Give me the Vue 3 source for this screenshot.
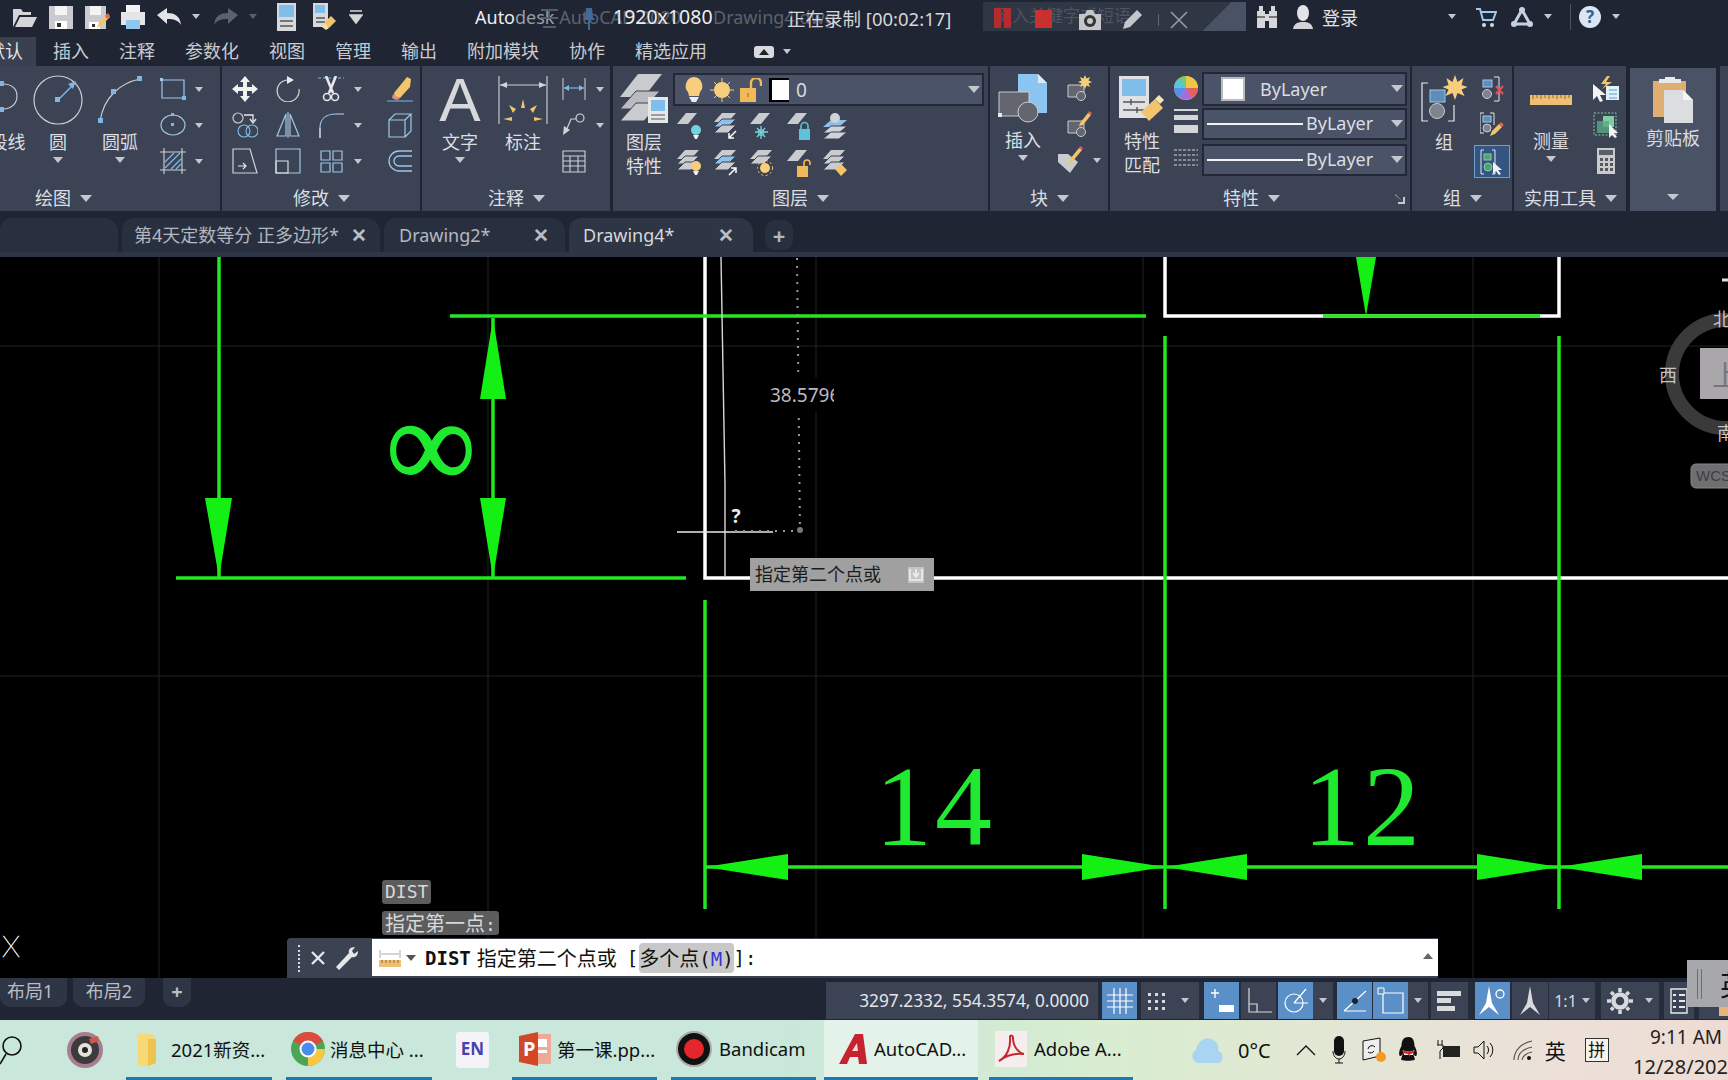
<script setup>
const menus = ['插入', '注释', '参数化', '视图', '管理', '输出', '附加模块', '协作', '精选应用']
const gridX = [159, 488, 816, 1143, 1473]
const gridY = [346, 676]
// arrow heads of the dimensions: tip x/y, then direction
const arrows = [
  '219,578 205,498 232,498',
  '493,318 480,399 506,399',
  '493,578 480,498 506,498',
  '1366,316 1356,257 1376,257',
  '705,867 788,854 788,880',
  '1165,867 1082,854 1082,880',
  '1165,867 1247,854 1247,880',
  '1559,867 1477,854 1477,880',
  '1559,867 1642,854 1642,880'
]
const greenLines = [
  [219, 257, 219, 578],
  [450, 316, 1146, 316],
  [493, 318, 493, 578],
  [176, 578, 686, 578],
  [1323, 316, 1540, 316],
  [1165, 336, 1165, 909],
  [1559, 336, 1559, 909],
  [705, 600, 705, 909],
  [705, 867, 1728, 867]
]
</script>

<template>
  <div class="screen">
    <!-- title bar -->
    <header class="titlebar">
      <div class="qat">
        <svg width="26" height="26" viewBox="0 0 26 26"><path d="M1 23V5h8l2 3h8v3H7L1 23zM3 23l5-10h17l-5 10z" fill="#d4d5d8"/></svg>
        <svg width="26" height="26" viewBox="0 0 26 26"><path d="M1 2h24v23H1z" fill="#c9cbcf"/><path d="M7 2h12v9H7z" fill="#f4f4f4"/><path d="M7 17h12v8H7z" fill="#fff"/><path d="M9 19h4v4H9z" fill="#333"/></svg>
        <svg width="26" height="26" viewBox="0 0 26 26"><path d="M1 2h21v23H1z" fill="#c9cbcf"/><path d="M6 2h11v9H6z" fill="#f4f4f4"/><path d="M5 18h11v7H5z" fill="#fff"/><path d="M8 20h3v3H8z" fill="#333"/><path d="M13 24l2-6 8-8 3 3-8 8z" fill="#f2c46d"/><path d="M21 12l3-3 2 3-3 3z" fill="#e0605c"/></svg>
        <svg width="26" height="26" viewBox="0 0 26 26"><path d="M6 1h14v7H6z" fill="#f2f2f2"/><path d="M1 8h24v13H1z" fill="#e4e5e7"/><path d="M6 16h14v9H6z" fill="#8fc7ee"/></svg>
        <svg width="26" height="20" viewBox="0 0 26 20"><path d="M1 8l10-7v5c8 0 13 3 14 12-3-5-7-6-14-6v5z" fill="#e2e3e6"/></svg>
        <span class="caret sm"></span>
        <svg class="redo" width="26" height="20" viewBox="0 0 26 20"><path d="M25 8L15 1v5C7 6 2 9 1 18c3-5 7-6 14-6v5z" fill="#5b616d"/></svg>
        <span class="caret sm dim"></span>
        <svg class="ws" width="19" height="28" viewBox="0 0 19 28"><path d="M0 0h19v28H0z" fill="#d8d9dc"/><path d="M2 2h15v12H2z" fill="#7fbdea"/><path d="M3 18h13M3 23h13" stroke="#555" stroke-width="1.5"/></svg>
        <svg class="ws2" width="24" height="28" viewBox="0 0 24 28"><path d="M0 0h15v24H0z" fill="#d8d9dc"/><path d="M2 2h10v8H2z" fill="#7fbdea"/><path d="M3 15h9M3 19h9" stroke="#555" stroke-width="1.5"/><path d="M11 20l7-7 5 5-7 7z" fill="#f2c46d"/><path d="M9 24l3-4 4 5-3 2z" fill="#f6dfa6"/></svg>
        <svg class="ws3" width="14" height="14" viewBox="0 0 14 14"><path d="M1 1h12M1 5h12L7 13z" stroke="#d4d5d8" stroke-width="1.6" fill="#d4d5d8"/></svg>
      </div>
      <div class="doc-title"><b>Auto</b><em>desk</em><span> AutoCAD 2020</span><span class="doc-name">Drawing4.dwg</span></div>
      <div class="search">键入关键字或短语</div>
      <div class="account">
        <svg width="22" height="24" viewBox="0 0 22 24"><path d="M1 6h8v17H1zM13 6h8v17h-8zM3 1h4v5H3zM15 1h4v5h-4zM9 9h4v7H9z" fill="#d6d7da"/><path d="M1 12h8M13 12h8" stroke="#555" stroke-width="1.5"/></svg>
        <svg class="user" width="22" height="26" viewBox="0 0 22 26"><ellipse cx="11" cy="9" rx="6" ry="8" fill="#e2e3e6"/><path d="M1 25c1-6 5-7 10-7s9 1 10 7z" fill="#d3d4d7"/></svg>
        <span class="login">登录</span>
        <span class="caret sm login-caret"></span>
        <svg class="cart" width="22" height="20" viewBox="0 0 22 20"><path d="M1 2h4l3 11h10l3-8H6" fill="none" stroke="#9fc8e8" stroke-width="2"/><circle cx="9" cy="18" r="2" fill="#d6d7da"/><circle cx="17" cy="18" r="2" fill="#d6d7da"/></svg>
        <svg class="tri" width="22" height="20" viewBox="0 0 22 20"><path d="M11 3L3 17h16z" fill="none" stroke="#c5d2e2" stroke-width="3"/><circle cx="11" cy="3" r="3" fill="#c5d2e2"/><circle cx="3" cy="17" r="3" fill="#c5d2e2"/><circle cx="19" cy="17" r="3" fill="#c5d2e2"/></svg>
        <span class="caret sm"></span>
        <i class="acc-sep"></i>
        <span class="help">?</span>
        <span class="caret sm"></span>
      </div>
      <!-- screen recorder overlay -->
      <div class="recorder">
        <svg class="rec-lines" width="17" height="19" viewBox="0 0 17 19"><path d="M0 1h17M0 9h17M2 18h13" stroke="#565b66" stroke-width="2"/><path d="M8 1v8" stroke="#565b66" stroke-width="2"/></svg>
        <svg class="rec-pin" width="12" height="22" viewBox="0 0 12 22"><path d="M3 0h6l1 9 2 3H0l2-3zM5 12h2v10H5z" fill="#41699a"/></svg>
        <span class="rec-size">1920x1080</span>
        <span class="rec-time">正在录制 [00:02:17]</span>
        <span class="rec-pause"><i></i><i></i></span>
        <span class="rec-stop"></span>
        <svg class="rec-cam" width="24" height="22" viewBox="0 0 24 22"><path d="M1 5h6l2-4h6l2 4h6v16H1z" fill="#c5c6c9"/><circle cx="12" cy="12" r="6" fill="#333"/><circle cx="12" cy="12" r="3" fill="#c5c6c9"/></svg>
        <svg class="rec-pen" width="22" height="22" viewBox="0 0 22 22"><path d="M1 21l2-7L15 2l5 5L8 19z" fill="#c5c6c9"/></svg>
        <i class="rec-sep"></i>
        <svg class="rec-x" width="18" height="18" viewBox="0 0 18 18"><path d="M1 1l16 16M17 1L1 17" stroke="#9a9ca0" stroke-width="1.6"/></svg>
      </div>
    </header>

    <!-- ribbon tabs -->
    <nav class="menu">
      <span class="menu-tab active">默认</span>
      <span v-for="m in menus" :key="m" class="menu-tab">{{ m }}</span>
      <span class="menu-min"><i></i></span>
      <span class="caret sm"></span>
    </nav>

    <!-- ribbon -->
    <section class="ribbon">
      <div class="panel p-draw">
        <div class="body">
          <div class="big w-poly">
            <svg width="25" height="50" viewBox="0 0 25 50"><path d="M4 9h4c9 0 14 5 14 12s-5 13-14 13H4" fill="none" stroke="#c9ccd1" stroke-width="1.2"/><rect x="4" y="6" width="5" height="5" fill="#7db7e2"/><rect x="4" y="32" width="5" height="5" fill="#7db7e2"/></svg>
            <span class="label">段线</span>
          </div>
          <div class="big w-circle">
            <svg width="50" height="50" viewBox="0 0 50 50"><circle cx="25" cy="25" r="24" fill="none" stroke="#c9ccd1" stroke-width="1.2"/><path d="M25 25L41 9" stroke="#7db7e2" stroke-width="1.4"/><path d="M43 6l-8 3 5 5z" fill="#7db7e2"/><rect x="22" y="22" width="5" height="5" fill="#7db7e2"/></svg>
            <span class="label">圆</span>
            <span class="caret"></span>
          </div>
          <div class="big w-arc">
            <svg width="48" height="50" viewBox="0 0 48 50"><path d="M4 46C8 22 24 8 44 4" fill="none" stroke="#c9ccd1" stroke-width="1.2"/><rect x="2" y="43" width="5" height="5" fill="#7db7e2"/><rect x="15" y="14" width="5" height="5" fill="#7db7e2"/><rect x="41" y="1" width="5" height="5" fill="#7db7e2"/></svg>
            <span class="label">圆弧</span>
            <span class="caret"></span>
          </div>
          <div class="smalls draw-smalls">
            <svg width="26" height="24" viewBox="0 0 26 24"><path d="M2 3h22v18H2z" fill="none" stroke="#9fc8e8" stroke-width="1.2"/><rect y="1" width="3" height="3" fill="#9fc8e8"/><rect x="22" y="19" width="4" height="4" fill="#7db7e2"/></svg>
            <span class="caret sm"></span>
            <svg width="26" height="24" viewBox="0 0 26 24"><ellipse cx="13" cy="12" rx="12" ry="10" fill="none" stroke="#9fc8e8" stroke-width="1.2"/><rect x="11" y="10" width="3" height="3" fill="#7db7e2"/><rect x="11" y="0" width="3" height="3" fill="#7db7e2"/></svg>
            <span class="caret sm"></span>
            <svg width="26" height="26" viewBox="0 0 26 26"><path d="M4 0v26M22 0v26M0 4h26M0 22h26" stroke="#d0d3d8" stroke-width="1.1"/><path d="M5 20L20 5M5 14L14 5M11 21L21 11M16 21l5-5" stroke="#7db7e2" stroke-width="1.4"/></svg>
            <span class="caret sm"></span>
          </div>
        </div>
        <div class="ptitle"><span class="t-draw">绘图</span><span class="caret t"></span></div>
      </div>

      <div class="panel p-mod">
        <div class="body">
          <div class="mod-grid">
            <svg width="26" height="26" viewBox="0 0 26 26"><path d="M13 0l5 6h-3v5h5V8l6 5-6 5v-3h-5v5h3l-5 6-5-6h3v-5H6v3l-6-5 6-5v3h5V6H8z" fill="#f2f2f3"/></svg>
            <svg width="26" height="26" viewBox="0 0 26 26"><path d="M15 4A11 11 0 1 0 24 13" fill="none" stroke="#c9ccd1" stroke-width="1.3"/><path d="M12 0l7 4-7 4z" fill="#e8e9eb"/></svg>
            <div class="with-caret">
              <svg width="26" height="26" viewBox="0 0 26 26"><path d="M0 2h26" stroke="#7db7e2" stroke-width="1" stroke-dasharray="3 2"/><path d="M8 0l7 17M18 0l-7 17" stroke="#e8e9eb" stroke-width="2.6"/><circle cx="9" cy="21" r="3.5" fill="none" stroke="#e8e9eb" stroke-width="1.6"/><circle cx="17" cy="21" r="3.5" fill="none" stroke="#e8e9eb" stroke-width="1.6"/></svg>
              <span class="caret sm"></span>
            </div>
            <svg width="26" height="26" viewBox="0 0 26 26"><path d="M7 17L20 1l4 2-1 8-10 11-5-1z" fill="#f2c46d"/><path d="M6 18l7 5-4 1-4-2z" fill="#e98a86"/><path d="M0 25h26" stroke="#7db7e2" stroke-width="1"/></svg>

            <svg width="26" height="26" viewBox="0 0 26 26"><circle cx="6" cy="6" r="5" fill="none" stroke="#c9ccd1" stroke-width="1.2"/><path d="M12 3h9v6M18 7l3 4 3-4" fill="none" stroke="#e8e9eb" stroke-width="1.3"/><circle cx="12" cy="19" r="6" fill="none" stroke="#7db7e2" stroke-width="1.2"/><circle cx="20" cy="19" r="6" fill="none" stroke="#7db7e2" stroke-width="1.2"/></svg>
            <svg width="26" height="26" viewBox="0 0 26 26"><path d="M11 2L2 24h9zM15 2l9 22h-9z" fill="none" stroke="#9fc8e8" stroke-width="1.2"/><path d="M13 0v26" stroke="#d0d3d8" stroke-width="1"/></svg>
            <div class="with-caret">
              <svg width="26" height="26" viewBox="0 0 26 26"><path d="M2 26V16C2 7 8 2 18 2" fill="none" stroke="#9fc8e8" stroke-width="1.2"/><path d="M18 2h8M2 16v10" stroke="#d0d3d8" stroke-width="1.2"/></svg>
              <span class="caret sm"></span>
            </div>
            <svg width="26" height="26" viewBox="0 0 26 26"><path d="M2 8h16v17H2zM2 8l6-6h16L18 8M18 25l6-6V2" fill="none" stroke="#9fc8e8" stroke-width="1.2"/></svg>

            <svg width="26" height="26" viewBox="0 0 26 26"><path d="M1 1h17l7 24H1zM1 1v24" fill="none" stroke="#d0d3d8" stroke-width="1.2"/><path d="M6 18h8m-3-3l3 3-3 3" fill="none" stroke="#e8e9eb" stroke-width="1.2"/></svg>
            <svg width="26" height="26" viewBox="0 0 26 26"><path d="M1 1h24v24H1z" fill="none" stroke="#9fc8e8" stroke-width="1.2"/><path d="M1 13h12v12H1z" fill="none" stroke="#e0e2e5" stroke-width="1.2"/></svg>
            <div class="with-caret">
              <svg width="26" height="26" viewBox="0 0 26 26"><path d="M3 3h9v9H3zM15 3h9v9h-9zM3 15h9v9H3zM15 15h9v9h-9z" fill="none" stroke="#9fc8e8" stroke-width="1.2"/></svg>
              <span class="caret sm"></span>
            </div>
            <svg width="26" height="26" viewBox="0 0 26 26"><path d="M25 3H12a10 10 0 0 0 0 20h13M25 8H12a5 5 0 0 0 0 10h13" fill="none" stroke="#9fc8e8" stroke-width="1.3"/></svg>
          </div>
        </div>
        <div class="ptitle"><span class="t-mod">修改</span><span class="caret t"></span></div>
      </div>

      <div class="panel p-note">
        <div class="body">
          <div class="big w-text">
            <span class="big-a">A</span>
            <span class="label">文字</span>
            <span class="caret"></span>
          </div>
          <div class="big w-dim">
            <svg width="50" height="50" viewBox="0 0 50 50"><path d="M1 1v48M49 1v48" stroke="#d0d3d8" stroke-width="1.1"/><path d="M2 10h46" stroke="#d0d3d8" stroke-width="1"/><path d="M2 10l7-3v6zM48 10l-7-3v6z" fill="#d0d3d8"/><path d="M25 24l-2 9h4zM11 30l4 8 3-4zM39 30l-4 8-3-4zM5 44l9-2v4zM45 44l-9-2v4z" fill="#f2c46d"/></svg>
            <span class="label">标注</span>
          </div>
          <div class="note-smalls">
            <div class="with-caret">
              <svg width="24" height="24" viewBox="0 0 24 24"><path d="M1 1v22M23 1v22" stroke="#d0d3d8" stroke-width="1"/><path d="M2 11h20" stroke="#7db7e2" stroke-width="1.2"/><path d="M2 11l5-3v6zM22 11l-5-3v6z" fill="#7db7e2"/></svg>
              <span class="caret sm"></span>
            </div>
            <div class="with-caret">
              <svg width="24" height="24" viewBox="0 0 24 24"><circle cx="18" cy="5" r="4" fill="none" stroke="#d0d3d8" stroke-width="1.2"/><path d="M14 6H9L4 18" fill="none" stroke="#d0d3d8" stroke-width="1.2"/><path d="M1 22l1-9 6 4z" fill="#d0d3d8"/></svg>
              <span class="caret sm"></span>
            </div>
            <svg width="24" height="24" viewBox="0 0 24 24"><path d="M1 2h22v21H1zM1 7h22M1 12h22M1 17h22M8 7v16M16 7v16" fill="none" stroke="#d0d3d8" stroke-width="1.1"/></svg>
          </div>
        </div>
        <div class="ptitle"><span class="t-note">注释</span><span class="caret t"></span></div>
      </div>

      <div class="panel p-layer">
        <div class="body layer-body">
          <div class="big w-lprop">
            <svg width="48" height="50" viewBox="0 0 48 50"><path d="M0 24L18 1h24L24 24z" fill="#c9cbcf"/><path d="M0 36l16-18h24L24 36z" fill="#b9bbc0" stroke="#3b4354"/><path d="M0 48l16-18h24L24 48z" fill="#c9cbcf" stroke="#3b4354"/><path d="M28 24h20v26H28z" fill="#e6e7e9"/><path d="M31 27h14v11H31z" fill="#7fbdea"/><path d="M31 42h14M31 46h14" stroke="#555"/></svg>
            <span class="label two">图层<br>特性</span>
          </div>
          <div class="layer-main">
            <div class="combo layer-combo">
              <svg width="20" height="26" viewBox="0 0 20 26"><path d="M10 0a9 9 0 0 1 6 15l-1 4H5l-1-4a9 9 0 0 1 6-15z" fill="#f8cd7c"/><path d="M5 20h10l-3 5H8z" fill="#eee"/></svg>
              <svg class="sun" width="24" height="24" viewBox="0 0 24 24"><path d="M12 0v24M0 12h24M4 4l16 16M20 4L4 20" stroke="#f8cd7c" stroke-width="1"/><circle cx="12" cy="12" r="8" fill="#f8cd7c"/></svg>
              <svg class="lock" width="23" height="24" viewBox="0 0 23 24"><path d="M1 10h16v14H1z" fill="#f2b95a"/><path d="M12 10V5a5 5 0 0 1 10 0v3" fill="none" stroke="#f2b95a" stroke-width="2.4"/><path d="M9 15v4" stroke="#8a6a2c"/></svg>
              <i class="swatch black"></i>
              <span class="zero">0</span>
              <span class="caret big-caret"></span>
            </div>
            <div class="layer-icons">
              <svg width="24" height="28" viewBox="0 0 24 28"><path d="M0 11L9 0h11l-9 11z" fill="#c9cbcf"/><circle cx="19" cy="17" r="5" fill="#73d3dc"/><path d="M16 22h6l-2 4h-2z" fill="#eee"/></svg>
              <svg width="24" height="28" viewBox="0 0 24 28"><path d="M0 9L8 0h14l-8 9z" fill="#c9cbcf"/><path d="M0 14l8-8h14l-8 8z" fill="#8fc0ea" stroke="#3b4354"/><path d="M0 20l8-8h14l-8 8z" fill="#c9cbcf" stroke="#3b4354"/><path d="M22 18l-7 7m0-5v5h5" fill="none" stroke="#fff" stroke-width="1.5"/></svg>
              <svg width="24" height="28" viewBox="0 0 24 28"><path d="M0 11L9 0h11l-9 11z" fill="#c9cbcf"/><path d="M11 13v13M5 19h13M7 15l8 9M15 15l-8 9" stroke="#73d3dc" stroke-width="1.3"/><circle cx="11" cy="19.500" r="3" fill="none" stroke="#73d3dc"/></svg>
              <svg width="24" height="28" viewBox="0 0 24 28"><path d="M0 11L9 0h11l-9 11z" fill="#c9cbcf"/><path d="M12 16h11v11H12z" fill="#5ec3d8"/><path d="M14 16v-3a3.500 3.500 0 0 1 7 0v3" fill="none" stroke="#5ec3d8" stroke-width="1.6"/></svg>
              <svg width="24" height="28" viewBox="0 0 24 28"><path d="M0 14l8-7h16l-8 7z" fill="#8fc0ea"/><path d="M0 20l8-7h16l-8 7z" fill="#d0d3d8" stroke="#3b4354"/><path d="M0 26l8-7h16l-8 7z" fill="#d0d3d8" stroke="#3b4354"/><circle cx="12" cy="5" r="5" fill="#d0d3d8"/></svg>

              <svg width="24" height="28" viewBox="0 0 24 28"><path d="M0 9L8 0h14l-8 9z" fill="#c9cbcf"/><path d="M0 14l8-8h14l-8 8z" fill="#c9cbcf" stroke="#3b4354"/><path d="M0 20l8-8h14l-8 8z" fill="#c9cbcf" stroke="#3b4354"/><circle cx="19" cy="16" r="5" fill="#f8cd7c"/><path d="M16 21h6l-2 4h-2z" fill="#eee"/></svg>
              <svg width="24" height="28" viewBox="0 0 24 28"><path d="M0 9L8 0h14l-8 9z" fill="#c9cbcf"/><path d="M0 14l8-8h14l-8 8z" fill="#8fc0ea" stroke="#3b4354"/><path d="M0 20l8-8h14l-8 8z" fill="#c9cbcf" stroke="#3b4354"/><path d="M15 25l7-7m-5 0h5v5" fill="none" stroke="#fff" stroke-width="1.5"/></svg>
              <svg width="24" height="28" viewBox="0 0 24 28"><path d="M0 9L8 0h14l-8 9z" fill="#c9cbcf"/><path d="M0 14l8-8h14l-8 8z" fill="#c9cbcf" stroke="#3b4354"/><circle cx="15" cy="18" r="5" fill="#f8cd7c"/><circle cx="15" cy="18" r="7.500" fill="none" stroke="#f8cd7c" stroke-dasharray="2 2.500"/></svg>
              <svg width="24" height="28" viewBox="0 0 24 28"><path d="M0 11L9 0h11l-9 11z" fill="#c9cbcf"/><path d="M10 16h11v11H10z" fill="#f2b95a"/><path d="M17 16v-3a3 3 0 0 1 6 0v2" fill="none" stroke="#f2b95a" stroke-width="1.6"/></svg>
              <svg width="24" height="28" viewBox="0 0 24 28"><path d="M0 9L8 0h14l-8 9z" fill="#c9cbcf"/><path d="M0 14l8-8h14l-8 8z" fill="#c9cbcf" stroke="#3b4354"/><path d="M0 20l8-8h14l-8 8z" fill="#c9cbcf" stroke="#3b4354"/><path d="M12 19l6-5 6 6-6 6z" fill="#f2c46d"/></svg>
            </div>
          </div>
        </div>
        <div class="ptitle"><span class="t-layer">图层</span><span class="caret t"></span></div>
      </div>

      <div class="panel p-block">
        <div class="body">
          <div class="big w-insert">
            <svg width="50" height="50" viewBox="0 0 50 50"><path d="M20 1h20l9 9v30H20z" fill="#8cc5f2"/><path d="M40 1l9 9h-9z" fill="#d8ecfb"/><path d="M1 19h30v24H1z" fill="#63666f" stroke="#c9ccd1" stroke-width="1"/><circle cx="30" cy="39" r="10" fill="#63666f" stroke="#c9ccd1" stroke-width="1"/><rect y="40" width="4" height="4" fill="#e8e9eb"/></svg>
            <span class="label">插入</span>
            <span class="caret"></span>
          </div>
          <div class="block-smalls">
            <svg width="26" height="26" viewBox="0 0 26 26"><path d="M2 10h16v12H2z" fill="#63666f" stroke="#c9ccd1"/><circle cx="15" cy="21" r="4.500" fill="#63666f" stroke="#c9ccd1"/><path d="M19 0l1.500 3.500L24 2l-1.500 3.500L26 7l-3.500 1.500L24 12l-3.500-1.500L19 14l-1.500-3.500L14 12l1.500-3.500L12 7l3.500-1.500L14 2l3.500 1.500z" fill="#f8cd7c"/></svg>
            <svg width="26" height="26" viewBox="0 0 26 26"><path d="M2 10h16v12H2z" fill="#63666f" stroke="#c9ccd1"/><circle cx="15" cy="21" r="4.500" fill="#63666f" stroke="#c9ccd1"/><path d="M14 12l8-10 3 2-8 10-4 1z" fill="#f2c46d"/><path d="M22 2l1-2 3 2-1 2z" fill="#e0605c"/></svg>
            <div class="with-caret">
              <svg width="26" height="28" viewBox="0 0 26 28"><path d="M1 8h10l10 8-8 11L1 16z" fill="#c9cbcf"/><path d="M11 18l2-5 9-11 3 2-9 11z" fill="#f2c46d"/><path d="M22 2l1-2 3 2-1 2z" fill="#e0605c"/></svg>
              <span class="caret sm"></span>
            </div>
          </div>
        </div>
        <div class="ptitle"><span class="t-block">块</span><span class="caret t"></span></div>
      </div>

      <div class="panel p-prop">
        <div class="body prop-body">
          <div class="big w-match">
            <svg width="46" height="50" viewBox="0 0 46 50"><path d="M0 4h30v42H0z" fill="#e0e1e4"/><path d="M3 7h24v17H3z" fill="#7fbdea"/><path d="M4 30h22M4 38h22M12 27v6M18 35v6" stroke="#555" stroke-width="1.4"/><path d="M22 40l14-13 8 9-14 13z" fill="#f2c46d"/><path d="M36 27l4-4 5 5-4 4z" fill="#f6e3b3"/></svg>
            <span class="label two">特性<br>匹配</span>
          </div>
          <div class="prop-mid">
            <svg width="24" height="26" viewBox="0 0 24 26"><circle cx="12" cy="13" r="12" fill="#f5a34a"/><path d="M12 13L12 1a12 12 0 0 1 12 12z" fill="#f0c649"/><path d="M12 13h12a12 12 0 0 1-6 10z" fill="#e65f5f"/><path d="M12 13l6 10a12 12 0 0 1-12 0z" fill="#a76ae0"/><path d="M12 13L6 23A12 12 0 0 1 0 13z" fill="#5c8ef0"/><path d="M12 13H0A12 12 0 0 1 6 3z" fill="#56c7d6"/><path d="M12 13L6 3a12 12 0 0 1 6-2z" fill="#6cd06c"/></svg>
            <svg width="24" height="25" viewBox="0 0 24 25"><path d="M0 0h24v2H0zM0 6h24v5H0zM0 16h24v8H0z" fill="#d5d6d9"/></svg>
            <svg width="24" height="18" viewBox="0 0 24 18"><path d="M0 1h24M0 6h24M0 11h24M0 16h24" stroke="#d5d6d9" stroke-width="1" stroke-dasharray="3 1.500"/></svg>
          </div>
          <div class="prop-combos">
            <div class="combo c1"><i class="swatch white"></i><span class="by by1">ByLayer</span><span class="caret big-caret"></span></div>
            <div class="combo c2"><i class="lw"></i><span class="by">ByLayer</span><span class="caret big-caret"></span></div>
            <div class="combo c2"><i class="lw"></i><span class="by">ByLayer</span><span class="caret big-caret"></span></div>
          </div>
        </div>
        <div class="ptitle"><span class="t-prop">特性</span><span class="caret t"></span>
          <svg class="launch" width="10" height="10" viewBox="0 0 10 10"><path d="M0 0l8 8V3h2v7H3V8h5L0 1z" fill="#c4c7cd"/></svg>
        </div>
      </div>

      <div class="panel p-group">
        <div class="body">
          <div class="big w-group">
            <svg width="46" height="50" viewBox="0 0 46 50"><path d="M7 8H1v38h6M33 8" fill="none" stroke="#e8e9eb" stroke-width="1.2"/><path d="M27 46h6V30" fill="none" stroke="#e8e9eb" stroke-width="1.2"/><rect x="9" y="15" width="15" height="12" fill="#5f8cb8" stroke="#9fc8e8"/><circle cx="16" cy="36" r="7.500" fill="#80838b" stroke="#c9ccd1"/><path d="M34 0l2.500 7 6-4-2 7 6 2-6 2.500 3 6.500-7-3-2.500 7-2.500-7-7 3 3-6.500-6-2.500 6-2-2-7 6 4z" fill="#f8cd7c"/></svg>
            <span class="label">组</span>
          </div>
          <div class="group-smalls">
            <svg width="24" height="26" viewBox="0 0 24 26"><path d="M14 1h5v24h-5" fill="none" stroke="#e8e9eb"/><rect x="3" y="4" width="9" height="7" fill="#5f8cb8" stroke="#9fc8e8"/><circle cx="7" cy="18" r="4.500" fill="#80838b" stroke="#c9ccd1"/><path d="M16 10l7 8m0-8l-7 8" stroke="#e0505c" stroke-width="2.2"/></svg>
            <svg width="24" height="26" viewBox="0 0 24 26"><path d="M4 1H0v20h4M10 1h4v12" fill="none" stroke="#e8e9eb"/><rect x="3" y="4" width="8" height="6" fill="#5f8cb8" stroke="#9fc8e8"/><circle cx="7" cy="16" r="4" fill="#80838b" stroke="#c9ccd1"/><path d="M10 24l2-5 7-7 3 3-7 7z" fill="#f2c46d"/><path d="M19 12l2-2 3 3-2 2z" fill="#e0605c"/></svg>
            <span class="sel-on">
              <svg width="24" height="26" viewBox="0 0 24 26"><path d="M4 1H1v24h3M12 1h3v24h-3" fill="none" stroke="#e8e9eb"/><rect x="4" y="5" width="7" height="6" fill="#52a078" stroke="#7ed0a4"/><circle cx="8" cy="18" r="4" fill="#52a078" stroke="#7ed0a4"/><path d="M13 13v12l3-3 3 4 2-1-3-4h4z" fill="#f2f2f3"/></svg>
            </span>
          </div>
        </div>
        <div class="ptitle"><span class="t-group">组</span><span class="caret t"></span></div>
      </div>

      <div class="panel p-util">
        <div class="body">
          <div class="big w-measure">
            <svg width="44" height="50" viewBox="0 0 44 50"><path d="M1 20h42v10H1z" fill="#eebf74"/><path d="M4 20v4M8 20v3M12 20v4M16 20v3M20 20v4M24 20v3M28 20v4M32 20v3M36 20v4M40 20v3" stroke="#8a6a2c" stroke-width="1"/></svg>
            <span class="label">测量</span>
            <span class="caret"></span>
          </div>
          <div class="util-smalls">
            <svg width="26" height="26" viewBox="0 0 26 26"><path d="M14 0l-6 8h5l-4 5 10-7h-6l4-6z" fill="#f2c46d"/><path d="M13 10h13v14H13z" fill="#dff1fb"/><path d="M16 14h8M16 18h8M16 22h8" stroke="#5f9ccc"/><path d="M0 8v16l4-4 3 6 3-1-3-6h6z" fill="#f2f2f3"/></svg>
            <svg width="26" height="26" viewBox="0 0 26 26"><path d="M1 1h22v22H1z" fill="none" stroke="#7ed0a4" stroke-dasharray="2 1.500"/><path d="M10 4h11v11H10z" fill="#7ed0a4"/><path d="M4 9h12v12H4z" fill="#5aa985" opacity=".8"/><path d="M16 12v14l3-3 3 3 2-1-3-4h4z" fill="#f2f2f3"/></svg>
            <svg width="18" height="26" viewBox="0 0 18 26"><path d="M0 0h18v26H0z" fill="#c9cbcf"/><path d="M2 2h14v5H2z" fill="#5b5e66"/><path d="M3 10h3v3H3zM8 10h3v3H8zM13 10h3v3h-3zM3 15h3v3H3zM8 15h3v3H8zM13 15h3v3h-3zM3 20h3v3H3zM8 20h3v3H8zM13 20h3v3h-3z" fill="#55585f"/></svg>
          </div>
        </div>
        <div class="ptitle"><span class="t-util">实用工具</span><span class="caret t"></span></div>
      </div>

      <div class="panel p-clip">
        <svg class="clip-ic" width="40" height="48" viewBox="0 0 40 48"><path d="M0 6h33v36H0z" fill="#dfae72"/><path d="M12 2h10v2h6v4H6V4h6z" fill="#e8e9eb"/><path d="M11 15h19l10 10v23H11z" fill="#dcdde0"/><path d="M30 15l10 10H30z" fill="#f4f4f5"/></svg>
        <span class="label clip-label">剪贴板</span>
        <span class="caret clip-caret"></span>
      </div>
      <div class="panel p-rest"></div>
    </section>

    <!-- file tabs -->
    <div class="filetabs">
      <div class="ftab first"></div>
      <div class="ftab w1"><span>第4天定数等分 正多边形*</span><b>✕</b></div>
      <div class="ftab w2"><span>Drawing2*</span><b>✕</b></div>
      <div class="ftab w3 on"><span>Drawing4*</span><b>✕</b></div>
      <div class="ftab plus">+</div>
    </div>
    <div class="strip"></div>

    <!-- model space -->
    <main class="canvas">
      <svg class="drawing" width="1728" height="721" viewBox="0 257 1728 721">
        <line v-for="x in gridX" :key="'gx' + x" :x1="x" y1="257" :x2="x" y2="978" stroke="#222" />
        <line v-for="y in gridY" :key="'gy' + y" x1="0" :y1="y" x2="1728" :y2="y" stroke="#222" />

        <path d="M705 257V578H1728M1165 257V316H1559V257" fill="none" stroke="#fff" stroke-width="3.5" />
        <line v-for="(l, i) in greenLines" :key="i" :x1="l[0]" :y1="l[1]" :x2="l[2]" :y2="l[3]" stroke="#22e822" stroke-width="3.5" />
        <polygon v-for="p in arrows" :key="p" :points="p" fill="#14f014" />

        <text x="431" y="487" class="dim-text inf" text-anchor="middle" font-size="126">∞</text>
        <text x="875" y="845" class="dim-text num" font-size="114">14</text>
        <text x="1303" y="845" class="dim-text num" font-size="114">12</text>

        <!-- rubber band of the running DIST command -->
        <path d="M721 257L725 484V578" fill="none" stroke="#d8d8d8" stroke-width="1.4" />
        <path d="M677 532H773" stroke="#e8e8e8" stroke-width="1.4" />
        <path d="M735 531H800V530L797 257" fill="none" stroke="#999" stroke-width="2" stroke-dasharray="2 6" />
        <circle cx="800" cy="530" r="3" fill="#777" />
        <rect x="764" y="378" width="70" height="34" fill="#000" />
        <text x="770" y="402" class="measure" clip-path="url(#dimclip)">38.5796</text>
        <clipPath id="dimclip"><rect x="764" y="378" width="70" height="34" /></clipPath>
        <text x="736" y="523" class="quest">?</text>

        <!-- view cube -->
        <circle cx="1726" cy="374" r="54" fill="none" stroke="#3a3a3a" stroke-width="14" />
        <rect x="1700" y="348" width="40" height="51" fill="#aaa7ab" />
        <path d="M1722 280h6" stroke="#ddd" stroke-width="3" />
        <text x="1726" y="386" class="cube top">上</text>
        <text x="1713" y="326" class="cube">北</text>
        <text x="1659" y="382" class="cube">西</text>
        <text x="1717" y="440" class="cube">南</text>
        <rect x="1691" y="464" width="50" height="24" rx="5" fill="#6f6f72" stroke="#888" />
        <text x="1696" y="481" class="wcs">WCS</text>

        <text x="2" y="957" class="ucs">X</text>
      </svg>

      <div class="tip">
        <span>指定第二个点或</span>
        <svg width="16" height="16" viewBox="0 0 16 16"><path d="M0 0h16v16H0z" fill="#c4c4c4"/><path d="M2 2v11h12V2M8 2v7M5 6l3 4 3-4" fill="none" stroke="#eee" stroke-width="1.6"/></svg>
      </div>

      <div class="history">
        <span class="hist-line">DIST</span>
        <span class="hist-line wide">指定第一点<span class="mono">:</span></span>
      </div>

      <div class="command">
        <div class="cmd-tools">
          <i class="grip"></i>
          <svg width="16" height="16" viewBox="0 0 16 16"><path d="M2 2l12 12M14 2L2 14" stroke="#e6e7e9" stroke-width="2.4"/></svg>
          <svg width="24" height="24" viewBox="0 0 24 24"><path d="M1 21l13-14c-1-3 1-6 6-6l-3 4 2 3 4-3c0 5-3 7-6 6L4 24z" fill="#e6e7e9"/></svg>
        </div>
        <div class="cmd-input">
          <svg width="22" height="18" viewBox="0 0 22 18"><path d="M1 1v8M21 1v8M2 5h18" stroke="#aaa" stroke-width="1"/><path d="M0 11h22v7H0z" fill="#eebf74"/><path d="M3 11v3M7 11v3M11 11v3M15 11v3M19 11v3" stroke="#8a6a2c"/></svg>
          <span class="caret cmd-caret"></span>
          <b class="mono cmd-name">DIST</b>
          <span class="cmd-text">指定第二个点或</span>
          <span class="mono cmd-br">[</span>
          <span class="cmd-opt">多个点<span class="mono">(<em>M</em>)</span></span>
          <span class="mono">]:</span>
          <span class="cmd-up"></span>
        </div>
      </div>
    </main>

    <!-- layout tabs + status bar -->
    <div class="bottom">
      <div class="layouts">
        <span class="ltab t1">布局1</span>
        <span class="ltab t2">布局2</span>
        <span class="ltab plus">+</span>
      </div>
      <div class="status">
        <span class="cell coords">3297.2332, 554.3574, 0.0000</span>
        <span class="cell st on w35"><svg width="26" height="26" viewBox="0 0 26 26"><path d="M7 0v26M13 0v26M19 0v26M0 7h26M0 13h26M0 19h26" stroke="#fff" stroke-width="1.2"/></svg></span>
        <span class="cell st w38 shift"><svg width="18" height="18" viewBox="0 0 18 18"><path d="M1 1h3v3H1zM8 1h3v3H8zM15 1h3v3h-3zM1 8h3v3H1zM8 8h3v3H8zM15 8h3v3h-3zM1 15h3v3H1zM8 15h3v3H8zM15 15h3v3h-3z" fill="#d9dadd"/></svg></span>
        <span class="cell st w20 shift"><span class="caret sm"></span></span>
        <span class="cell st on w35 ml5"><svg width="26" height="26" viewBox="0 0 26 26"><path d="M6 1v9M2 5h8" stroke="#fff" stroke-width="1.4"/><path d="M10 17h15v7H10z" fill="#fff"/></svg></span>
        <span class="cell st w35 ml2"><svg width="26" height="26" viewBox="0 0 26 26"><path d="M3 0v24h23M3 16h8v8" fill="none" stroke="#d9dadd" stroke-width="1.2"/></svg></span>
        <span class="cell st on w35 ml2"><svg width="26" height="26" viewBox="0 0 26 26"><circle cx="11" cy="15" r="9" fill="none" stroke="#fff" stroke-width="1.2"/><path d="M11 15L23 1M11 15h14" stroke="#fff" stroke-width="1.2"/></svg></span>
        <span class="cell st w20"><span class="caret sm"></span></span>
        <span class="cell st on w35 ml4"><svg width="26" height="26" viewBox="0 0 26 26"><path d="M2 23L24 3M2 23h22" fill="none" stroke="#fff" stroke-width="1.2"/><circle cx="13" cy="13" r="3" fill="#1e2330"/></svg></span>
        <span class="cell st on w35 ml1"><svg width="28" height="28" viewBox="0 0 28 28"><path d="M6 6h20v20H6z" fill="none" stroke="#fff" stroke-width="1.2"/><path d="M1 1h6v6H1z" fill="#5b8fc7" stroke="#fff"/></svg></span>
        <span class="cell st w20"><span class="caret sm"></span></span>
        <span class="cell st w37 ml3"><svg width="26" height="24" viewBox="0 0 26 24"><path d="M0 2h24v5H0zM0 9h14v5H0zM0 17h18v5H0z" fill="#d9dadd"/></svg></span>
        <span class="cell st on w35 ml7"><svg width="28" height="30" viewBox="0 0 28 30"><path d="M10 0l3 17 7 12-10-8-10 8 7-12z" fill="#fff"/><circle cx="21" cy="8" r="4" fill="none" stroke="#fff" stroke-width="1.3"/></svg></span>
        <span class="cell st w36 ml2"><svg width="20" height="30" viewBox="0 0 20 30"><path d="M10 0l3 17 7 12-10-8-10 8 7-12z" fill="#d9dadd"/></svg></span>
        <span class="cell st w46 ml1 scale">1:1<span class="caret sm"></span></span>
        <span class="cell st w58 ml6"><svg width="26" height="26" viewBox="0 0 26 26"><circle cx="13" cy="13" r="6.500" fill="none" stroke="#d9dadd" stroke-width="4.500"/><path d="M13 0v26M0 13h26M4 4l18 18M22 4L4 22" stroke="#d9dadd" stroke-width="3.500" stroke-dasharray="4 18"/></svg><span class="caret sm"></span></span>
        <span class="cell st w30 ml5"><svg width="18" height="26" viewBox="0 0 18 26"><path d="M1 1h16v24H1z" fill="none" stroke="#e8e9eb" stroke-width="1.4"/><path d="M3 7h3M9 7h6M3 13h3M9 13h6M3 19h3M9 19h6" stroke="#e8e9eb" stroke-width="2"/></svg></span>
        <span class="cell st orange ml5"><i></i></span>
      </div>
      <div class="ime-float"><i></i><span>英</span></div>
    </div>

    <!-- windows taskbar -->
    <footer class="taskbar">
      <svg class="tb-search" width="24" height="30" viewBox="0 0 24 30"><circle cx="12" cy="11" r="9" fill="none" stroke="#111" stroke-width="1.6"/><path d="M6 19L0 29" stroke="#111" stroke-width="1.6"/></svg>
      <svg class="tb-music" width="36" height="36" viewBox="0 0 36 36"><circle cx="18" cy="18" r="18" fill="#a87d92"/><circle cx="18" cy="18" r="14" fill="#3c3a3a"/><circle cx="18" cy="18" r="7" fill="#e6e1dc"/><circle cx="18" cy="18" r="3" fill="#222"/><path d="M22 7l9-3 1 5-8 3z" fill="#d0584a"/></svg>
      <div class="task t-folder">
        <svg width="22" height="36" viewBox="0 0 22 36"><path d="M2 3h14l4 5v24l-8 3H2z" fill="#f7d978"/><path d="M12 8l8 0v24l-8 3z" fill="#f0c34e"/></svg>
        <span>2021新资...</span>
      </div>
      <div class="task t-chrome">
        <svg width="34" height="34" viewBox="0 0 34 34"><circle cx="17" cy="17" r="17" fill="#4aa654"/><path d="M17 17L2 9a17 17 0 0 1 30 0z" fill="#dd4b3e"/><path d="M17 17h17a17 17 0 0 1-17 17z" fill="#f7c83f"/><circle cx="17" cy="17" r="8.500" fill="#fff"/><circle cx="17" cy="17" r="6.500" fill="#4a8bf0"/></svg>
        <span>消息中心 ...</span>
      </div>
      <div class="task t-en">
        <span class="en-icon">EN</span>
      </div>
      <div class="task t-ppt">
        <svg width="32" height="34" viewBox="0 0 32 34"><path d="M12 2h20v30H12z" fill="#f0a995"/><path d="M17 7h11v8H17zM17 18h11v3H17z" fill="#fff"/><path d="M0 4l19-4v34L0 30z" fill="#d24726"/></svg>
        <b class="ppt-p">P</b>
        <span>第一课.pp...</span>
      </div>
      <div class="task t-bandi">
        <svg width="36" height="36" viewBox="0 0 36 36"><circle cx="18" cy="18" r="17" fill="#111" stroke="#aaa" stroke-width="2"/><circle cx="18" cy="18" r="10" fill="#e6262d"/></svg>
        <span>Bandicam</span>
      </div>
      <div class="task t-acad">
        <svg width="28" height="34" viewBox="0 0 28 34"><path d="M0 32L16 2h8l4 30h-8l-1-7h-8l-3 7z" fill="#c8212f"/><path d="M13 19h6l-1-8z" fill="#f0dada"/></svg>
        <span>AutoCAD...</span>
      </div>
      <div class="task t-adobe">
        <svg width="34" height="36" viewBox="0 0 34 36"><path d="M0 0h32v36H0z" fill="#f4efee"/><path d="M4 30c8-4 12-14 11-24 0-2 3-2 3 1 0 9 6 15 11 16-8-1-17 1-25 7z" fill="none" stroke="#c8252c" stroke-width="2"/></svg>
        <span>Adobe A...</span>
      </div>
      <div class="tray">
        <svg class="tr-cloud" width="34" height="28" viewBox="0 0 34 28"><path d="M7 27a7 7 0 0 1-2-13C6 6 14 0 20 3c6 2 9 8 7 12 6 1 7 12-1 12z" fill="#a9d5f2"/></svg>
        <span class="temp">0°C</span>
        <svg class="tr-up" width="20" height="12" viewBox="0 0 20 12"><path d="M1 11l9-9 9 9" fill="none" stroke="#111" stroke-width="1.3"/></svg>
        <svg class="tr-mic" width="14" height="28" viewBox="0 0 14 28"><rect x="2" y="0" width="10" height="20" rx="5" fill="#111"/><path d="M1 15c0 5 3 8 6 8s6-3 6-8M7 23v4M3 27h8" fill="none" stroke="#111"/></svg>
        <svg class="tr-sync" width="24" height="26" viewBox="0 0 24 26"><path d="M1 4l17-3v18L1 23z" fill="#eee" stroke="#111"/><circle cx="19" cy="20" r="5" fill="#f29a21"/><path d="M6 12a4 4 0 0 1 7-2M12 14a4 4 0 0 1-6 1" fill="none" stroke="#111"/></svg>
        <svg class="tr-qq" width="19" height="26" viewBox="0 0 19 26"><path d="M9.500 0c5 0 6 5 6 9 3 5 3 10 1 10-1 0-1-1-2-2 0 3 2 4 1 6-3 1-10 1-13 0-1-2 1-3 1-6-1 1-1 2-2 2-2 0-2-5 1-10 0-4 1-9 7-9z" fill="#111"/><path d="M4 13c3 2 8 2 11 0l-1 5H5z" fill="#eee"/><path d="M3 13c4 2 9 2 13 0l-1 3-4 1v3l-2-3-5-1z" fill="#d22"/></svg>
        <svg class="tr-bat" width="24" height="20" viewBox="0 0 24 20"><path d="M6 6h17v11H6z" fill="#222"/><path d="M1 0v5M5 0v5M0 5h6v3L3 11v8" fill="none" stroke="#111"/></svg>
        <svg class="tr-vol" width="22" height="22" viewBox="0 0 22 22"><path d="M1 8h4l6-6v18l-6-6H1z" fill="none" stroke="#111"/><path d="M14 7a6 6 0 0 1 0 8M17 4a10 10 0 0 1 0 14" fill="none" stroke="#111"/></svg>
        <svg class="tr-wifi" width="20" height="22" viewBox="0 0 20 22"><path d="M1 21C1 12 8 4 19 2M5 21c0-6 5-11 14-13M9 21c0-3 4-7 10-8" fill="none" stroke="#555" stroke-width="1.200"/><circle cx="16" cy="19" r="2" fill="#111"/></svg>
        <span class="tr-en">英</span>
        <span class="tr-pin">拼</span>
        <div class="clock"><span>9:11 AM</span><span class="date">12/28/2021</span></div>
      </div>
    </footer>
  </div>
</template>

<style>
html, body { margin: 0; background: #000; overflow: hidden; }
</style>

<style scoped>
.screen {
  width: 1728px;
  height: 1080px;
  overflow: hidden;
  position: relative;
  display: flex;
  flex-direction: column;
  background: #1f2532;
  font-family: "Noto Sans", "Noto Sans CJK SC", sans-serif;
  color: #d8dadf;
}
svg { display: block; flex: none; }
.mono { font-family: "DejaVu Sans Mono", "Noto Sans CJK SC", monospace; }

.caret {
  display: block;
  flex: none;
  width: 0;
  height: 0;
  border-left: 5px solid transparent;
  border-right: 5px solid transparent;
  border-top: 6px solid #c4c7cd;
}
.caret.sm { border-left-width: 4px; border-right-width: 4px; border-top-width: 5px; }
.caret.dim { border-top-color: #5b616d; }
.caret.t { border-left-width: 6px; border-right-width: 6px; border-top-width: 7px; margin-left: 9px; }

/* title bar */
.titlebar {
  height: 37px;
  flex: none;
  display: flex;
  align-items: center;
  position: relative;
}
.qat {
  display: flex;
  align-items: center;
  gap: 10px;
  padding-left: 12px;
  padding-bottom: 4px;
  width: 463px;
  flex: none;
  box-sizing: border-box;
}
.qat .redo { margin-left: 3px; }
.qat .ws { margin-left: 10px; }
.qat .ws2 { margin-left: 7px; }
.qat .ws3 { margin-left: 2px; }
.doc-title {
  width: 520px;
  flex: none;
  font-size: 18px;
  white-space: nowrap;
  overflow: hidden;
  color: #5c626e;
  padding-left: 12px;
  padding-bottom: 3px;
  box-sizing: border-box;
}
.doc-title b { font-weight: 400; color: #eceef1; }
.doc-title em { font-style: normal; color: #9a9ea6; }
.doc-name { margin-left: 32px; }
.search {
  width: 263px;
  height: 29px;
  flex: none;
  background: linear-gradient(135deg, #2f3644 85%, #4a5366 85%);
  color: #4e5461;
  font-size: 17px;
  line-height: 28px;
  padding-left: 12px;
  box-sizing: border-box;
  align-self: flex-start;
  margin-top: 2px;
}
.account {
  display: flex;
  align-items: center;
  padding-left: 10px;
  padding-bottom: 4px;
  flex: 1;
  gap: 11px;
}
.user { margin-left: 3px; }
.login { font-size: 18px; color: #e0e2e6; margin-left: -3px; }
.login-caret { margin-left: 79px; }
.cart { margin-left: 8px; }
.tri { margin-left: 3px; }
.acc-sep { width: 1px; height: 26px; background: #4c5361; margin-left: 7px; }
.help {
  width: 22px;
  height: 22px;
  border-radius: 50%;
  background: #dbe6f3;
  color: #2f5fa0;
  font-weight: 700;
  font-size: 17px;
  line-height: 22px;
  text-align: center;
  margin-left: -3px;
}

/* recorder overlay */
.recorder {
  position: absolute;
  left: 613px;
  top: 0;
  height: 37px;
  width: 580px;
}
.recorder > * { position: absolute; }
.rec-lines { left: -72px; top: 9px; }
.rec-pin { left: -30px; top: 8px; }
.rec-size { left: 0; top: 3px; font-size: 19.500px; color: #eee; }
.rec-time { left: 174px; top: 5px; font-size: 18.500px; color: #d6d7da; white-space: nowrap; }
.rec-pause { left: 381px; top: 8px; display: flex; gap: 3px; }
.rec-pause i { width: 7px; height: 20px; background: #b52c30; }
.rec-stop { left: 422px; top: 10px; width: 17px; height: 18px; background: #c9302f; }
.rec-cam { left: 465px; top: 9px; }
.rec-pen { left: 509px; top: 8px; }
.rec-sep { left: 545px; top: 14px; width: 1px; height: 12px; background: #666; }
.rec-x { left: 557px; top: 11px; }

/* menu */
.menu {
  height: 29px;
  flex: none;
  display: flex;
  align-items: center;
  gap: 30px;
  margin-left: -26px;
  overflow: visible;
}
.menu-tab { font-size: 18px; line-height: 29px; color: #c8cbd1; white-space: nowrap; }
.menu-tab.active { background: #39404f; padding: 0 13px; margin-right: -13px; color: #e2e4e8; }
.menu-min {
  width: 20px;
  height: 12px;
  background: #d8dadf;
  border-radius: 3px;
  margin-left: 17px;
  position: relative;
}
.menu-min i {
  position: absolute;
  left: 5px;
  top: 3px;
  border-left: 5px solid transparent;
  border-right: 5px solid transparent;
  border-bottom: 6px solid #222;
}
.menu .caret { margin-left: -21px; }

/* ribbon */
.ribbon {
  height: 145px;
  flex: none;
  display: flex;
  gap: 2px;
  overflow: hidden;
}
.panel {
  background: #3b4354;
  height: 145px;
  display: flex;
  flex-direction: column;
  flex: none;
  position: relative;
}
.p-draw { width: 220px; }
.p-mod { width: 198px; }
.p-note { width: 188px; }
.p-layer { width: 375px; margin-left: 1px; }
.p-block { width: 118px; }
.p-prop { width: 300px; }
.p-group { width: 100px; }
.p-util { width: 112px; }
.p-clip {
  width: 86px;
  margin-left: 2px;
  background: #4a5366;
  height: 143px;
  margin-top: 2px;
  align-items: center;
}
.p-rest { width: 10px; margin-left: 2px; }
.body { height: 120px; display: flex; box-sizing: border-box; padding-top: 9px; }
.big { display: flex; flex-direction: column; align-items: center; flex: none; }
.label { font-size: 18px; line-height: 24px; margin-top: 5px; color: #dcdee2; text-align: center; white-space: nowrap; }
.label.two { margin-top: 7px; }
.big > .caret { margin-top: 3px; }

.ptitle {
  height: 25px;
  display: flex;
  align-items: center;
  font-size: 18px;
  line-height: 25px;
  color: #dcdee2;
  position: relative;
}
.t-draw { margin-left: 35px; }
.t-mod { margin-left: 71px; }
.t-note { margin-left: 66px; }
.t-layer { margin-left: 159px; }
.t-block { margin-left: 40px; }
.t-prop { margin-left: 113px; }
.launch { position: absolute; right: 5px; top: 8px; }
.t-group { margin-left: 31px; }
.t-util { margin-left: 10px; }

.w-poly { width: 25px; margin-left: -5px; }
.w-circle { width: 50px; margin-left: 13px; }
.w-arc { width: 48px; margin-left: 13px; }
.draw-smalls {
  display: grid;
  grid-template-columns: 26px 10px;
  column-gap: 8px;
  grid-auto-rows: 36px;
  align-items: center;
  justify-items: center;
  margin-left: 16px;
  margin-top: -4px;
}
.mod-grid {
  display: grid;
  grid-template-columns: 26px 26px 52px 26px;
  column-gap: 17px;
  grid-auto-rows: 36px;
  align-items: center;
  justify-items: start;
  margin: -4px 0 0 10px;
}
.with-caret { display: flex; align-items: center; gap: 10px; }
.big-a {
  font-family: "Liberation Sans", sans-serif;
  font-size: 62px;
  line-height: 50px;
  height: 50px;
  color: #d7d8dc;
}
.w-text { width: 44px; margin-left: 16px; }
.w-dim { width: 50px; margin-left: 16px; }
.note-smalls {
  display: flex;
  flex-direction: column;
  margin: -4px 0 0 14px;
}
.note-smalls > * { height: 36px; display: flex; align-items: center; }

.w-lprop { width: 48px; margin-left: 7px; }
.layer-body { padding-top: 7px; }
.layer-main { margin-left: 5px; }
.combo {
  background: #4a5368;
  border: 2px solid #222836;
  box-sizing: border-box;
  display: flex;
  align-items: center;
  position: relative;
}
.layer-combo { width: 311px; height: 33px; padding-left: 9px; }
.sun { margin-left: 6px; }
.lock { margin-left: 5px; }
.swatch { width: 20px; height: 20px; background: #fff; display: block; flex: none; }
.swatch.black { border-left: 3px solid #000; border-top: 2px solid #000; border-bottom: 2px solid #000; width: 17px; margin-left: 7px; }
.zero { font-size: 19px; margin-left: 7px; color: #d8dadf; }
.big-caret {
  position: absolute;
  right: 2px;
  top: 11px;
  border-left-width: 6px;
  border-right-width: 6px;
  border-top-width: 7px;
}
.layer-icons {
  display: grid;
  grid-template-columns: repeat(5, 24px);
  column-gap: 12.500px;
  grid-auto-rows: 37px;
  align-items: center;
  margin: 2px 0 0 4px;
}

.w-insert { width: 50px; margin-left: 8px; margin-top: -2px; }
.block-smalls {
  display: flex;
  flex-direction: column;
  margin: -5px 0 0 9px;
}
.block-smalls > * { height: 36px; display: flex; align-items: center; }
.block-smalls svg { align-self: center; }
.block-smalls > svg { height: 26px; margin: 5px 0; }

.w-match { width: 46px; margin-left: 9px; }
.prop-body { padding-top: 6px; }
.prop-mid {
  display: flex;
  flex-direction: column;
  margin: 3px 0 0 9px;
  gap: 8px;
}
.prop-mid > svg:last-child { margin-top: 7px; }
.prop-combos {
  margin-left: 4px;
  display: flex;
  flex-direction: column;
  gap: 2px;
}
.c1, .c2 { width: 205px; }
.c1 { height: 34px; padding-left: 17px; }
.c2 { height: 32px; }
.c2 + .c2 { margin-top: 2px; }
.c2 .big-caret { top: 10px; }
.c2 .by { margin-bottom: 3px; }
.c2 .lw { margin-bottom: 1px; }
.c1 .swatch { width: 24px; height: 24px; box-sizing: border-box; border: 2px solid #bbb; }
.by { font-size: 18px; color: #dcdee2; line-height: 28px; }
.by1 { margin-left: 15px; }
.lw { width: 96px; height: 2px; background: #f2f2f3; display: block; margin: 0 3px; }

.w-group { width: 46px; margin-left: 9px; }
.group-smalls {
  display: flex;
  flex-direction: column;
  align-items: center;
  margin: -4px 0 0 7px;
  width: 36px;
}
.group-smalls > svg { margin: 5px 0; }
.sel-on {
  width: 36px;
  height: 33px;
  display: flex;
  align-items: center;
  justify-content: center;
  background: #34557f;
  border: 1px solid #6fa0d0;
  box-sizing: border-box;
  margin-top: 2px;
}

.w-measure { width: 44px; margin-left: 15px; }
.w-measure .label { margin-top: 4px; }
.util-smalls {
  display: flex;
  flex-direction: column;
  align-items: center;
  margin: -4px 0 0 19px;
  width: 28px;
}
.util-smalls > svg { margin: 5px 0; }

.clip-ic { margin-top: 7px; }
.clip-label { margin-top: 3px; }
.clip-caret { margin-top: 44px; border-left-width: 6px; border-right-width: 6px; border-top-width: 6px; }

/* file tabs */
.filetabs {
  height: 41px;
  flex: none;
  display: flex;
  align-items: flex-end;
  gap: 4px;
  box-sizing: border-box;
}
.ftab {
  height: 34px;
  background: #283040;
  border-radius: 12px 14px 0 0;
  display: flex;
  align-items: center;
  font-size: 18px;
  line-height: 34px;
  color: #b3b7bf;
  box-sizing: border-box;
  flex: none;
  white-space: nowrap;
}
.ftab b { font-weight: 700; color: #b9bdc4; font-size: 19px; width: 20px; text-align: center; }
.ftab.first { width: 118px; }
.ftab.w1 { width: 258px; padding-left: 12px; }
.ftab.w1 span { width: 215px; }
.ftab.w2 { width: 181px; padding-left: 15px; }
.ftab.w2 span { width: 132px; }
.ftab.w3 { width: 184px; padding-left: 14px; background: #2e3545; color: #d5d8dd; }
.ftab.w3 span { width: 133px; }
.ftab.plus { width: 28px; height: 30px; margin-left: 8px; margin-bottom: 2px; justify-content: center; font-size: 22px; font-weight: 700; border-radius: 10px; }
.strip { height: 5px; flex: none; background: #2e3545; }

/* canvas */
.canvas {
  height: 721px;
  flex: none;
  background: #000;
  position: relative;
  overflow: hidden;
}
.drawing { position: absolute; left: 0; top: 0; }
.dim-text { font-family: "Liberation Serif", serif; fill: #1fea2f; }
.inf { stroke: #1fea2f; stroke-width: 1.5px; }
.num { letter-spacing: 3px; }
.measure { font-family: "Noto Sans", sans-serif; font-size: 19px; fill: #b9b9c2; }
.quest { font-family: "Noto Sans", sans-serif; font-size: 19px; font-weight: 700; fill: #eee; text-anchor: middle; }
.cube { font-family: "Noto Sans CJK SC", sans-serif; font-size: 18px; fill: #c4c4c4; }
.cube.top { font-size: 28px; fill: #77757a; text-anchor: middle; }
.wcs { font-family: "Liberation Sans", sans-serif; font-size: 15px; fill: #3e3e42; }
.ucs { font-family: "Lato", sans-serif; font-size: 30px; fill: #fff; stroke: #fff; stroke-width: 0.5px; font-weight: 100; }

.tip {
  position: absolute;
  left: 750px;
  top: 301px;
  width: 184px;
  height: 33px;
  background: #a0a0a0;
  color: #1c1c1c;
  font-size: 18px;
  line-height: 31px;
  padding: 0 10px 0 5px;
  box-sizing: border-box;
  display: flex;
  align-items: center;
  justify-content: space-between;
}
.history {
  position: absolute;
  left: 382px;
  top: 623px;
  display: flex;
  flex-direction: column;
  align-items: flex-start;
  gap: 7px;
}
.hist-line {
  background: #5c5c5c;
  border-radius: 3px;
  color: #d8d8d8;
  height: 24px;
  line-height: 24px;
  padding: 0 3px;
  font-size: 18px;
  font-family: "DejaVu Sans Mono", "Noto Sans CJK SC", monospace;
}
.hist-line.wide { font-size: 20px; font-family: "Noto Sans CJK SC", sans-serif; }
.hist-line.wide .mono { font-size: 18px; }
.command {
  position: absolute;
  left: 287px;
  top: 681px;
  width: 1151px;
  height: 40px;
  display: flex;
  background: #3b4252;
  border-radius: 4px 0 0 0;
}
.cmd-tools {
  width: 85px;
  flex: none;
  display: flex;
  align-items: center;
  padding-left: 11px;
  gap: 9px;
  box-sizing: border-box;
}
.grip { width: 0; height: 27px; border-left: 2px dotted #d8dadf; margin-right: 1px; }
.cmd-input {
  flex: 1;
  background: #fff;
  height: 37px;
  margin-top: 1px;
  color: #111;
  display: flex;
  align-items: center;
  padding-left: 7px;
  font-size: 19px;
  position: relative;
}
.cmd-caret { margin-left: 5px; border-top-color: #555; }
.cmd-name { margin-left: 9px; font-weight: 700; }
.cmd-text { font-size: 20px; margin-left: 6px; font-family: "Noto Sans CJK SC", sans-serif; }
.cmd-br { margin-left: 10px; }
.cmd-opt {
  background: #c8c8c8;
  border-radius: 4px;
  font-size: 20px;
  font-family: "Noto Sans CJK SC", sans-serif;
  height: 30px;
  line-height: 30px;
  white-space: nowrap;
  margin-left: 1px;
}
.cmd-opt .mono { font-size: 19px; }
.cmd-opt em { font-style: normal; color: #3737d8; }
.cmd-up {
  position: absolute;
  right: 5px;
  top: 14px;
  border-left: 5px solid transparent;
  border-right: 5px solid transparent;
  border-bottom: 6px solid #666;
}

/* layout tabs and status bar */
.bottom {
  height: 42px;
  flex: none;
  display: flex;
  position: relative;
  background: #1f2532;
}
.layouts {
  width: 826px;
  flex: none;
  display: flex;
  align-items: flex-start;
}
.ltab {
  height: 29px;
  line-height: 27px;
  font-size: 18px;
  background: #2e3545;
  color: #b9bdc4;
  border-radius: 0 0 10px 10px;
  text-align: center;
  flex: none;
}
.ltab.t1 { width: 67px; padding-left: 7px; box-sizing: border-box; text-align: left; }
.ltab.t2 { width: 72px; margin-left: 6px; }
.ltab.plus { width: 28px; margin-left: 18px; font-weight: 700; font-size: 20px; }
.status {
  flex: 1;
  height: 37px;
  margin-top: 4px;
  background: #262c39;
  display: flex;
  gap: 0;
}
.cell {
  height: 37px;
  background: #3b4354;
  flex: none;
  display: flex;
  align-items: center;
  justify-content: center;
  box-sizing: border-box;
}
.coords { width: 272px; margin-right: 4px; font-size: 17.300px; color: #e4e6ea; justify-content: flex-end; padding-right: 9px; white-space: nowrap; }
.st.on { background: #5b8fc7; }
.w20 { width: 20px; }
.w30 { width: 30px; }
.w35 { width: 35px; }
.w36 { width: 36px; }
.w37 { width: 37px; }
.w38 { width: 38px; margin-left: 4px; }
.w46 { width: 46px; }
.w58 { width: 58px; gap: 12px; }
.shift { padding-right: 8px; }
.ml1 { margin-left: 1px; }
.ml2 { margin-left: 2px; }
.ml3 { margin-left: 3px; }
.ml4 { margin-left: 4px; }
.ml5 { margin-left: 5px; }
.ml6 { margin-left: 6px; }
.ml7 { margin-left: 7px; }
.scale { font-size: 16px; gap: 5px; color: #d9dadd; }
.orange { flex: 1; align-items: flex-end; justify-content: flex-end; }
.orange i { display: block; width: 9px; height: 11px; background: #e8b27a; margin-bottom: 3px; }
.ime-float {
  position: absolute;
  left: 1687px;
  top: -18px;
  width: 41px;
  height: 47px;
  background: #a7a8ac;
  display: flex;
  align-items: center;
  overflow: hidden;
}
.ime-float i { width: 3px; height: 30px; border-left: 1px solid #6c6c70; border-right: 1px solid #6c6c70; margin-left: 10px; flex: none; }
.ime-float span { font-size: 28px; color: #111; margin-left: 18px; flex: none; }

/* taskbar */
.taskbar {
  height: 60px;
  flex: none;
  display: flex;
  align-items: center;
  position: relative;
  background: linear-gradient(90deg, #c9e7da 0%, #c9e7da 45%, #d9edd0 65%, #ece0d8 90%, #eedcd4 100%);
  color: #111;
  font-size: 18.500px;
}
.tb-music { margin-left: 43px; }
.task {
  height: 60px;
  flex: none;
  display: flex;
  align-items: center;
  box-sizing: border-box;
  border-bottom: 3px solid #1a7ab8;
  white-space: nowrap;
  position: relative;
}
.t-folder { width: 146px; margin-left: 23px; padding-left: 10px; gap: 13px; }
.t-chrome { width: 146px; margin-left: 14px; padding-left: 5px; gap: 5px; }
.t-en { width: 55px; margin-left: 12px; padding-left: 12px; border-bottom: 0; }
.en-icon {
  width: 33px;
  height: 36px;
  background: #f4f4f8;
  border-radius: 3px;
  color: #4a3fb0;
  font-size: 17px;
  font-weight: 700;
  text-align: center;
  line-height: 34px;
  display: block;
}
.t-ppt { width: 145px; margin-left: 13px; padding-left: 7px; gap: 6px; }
.ppt-p { position: absolute; left: 11px; top: 15px; color: #fff; font-size: 20px; }
.t-bandi { width: 145px; margin-left: 14px; padding-left: 5px; gap: 7px; }
.t-acad { width: 154px; margin-left: 8px; padding-left: 15px; gap: 7px; background: #e4f3ea; }
.t-adobe { width: 144px; margin-left: 11px; padding-left: 6px; gap: 5px; }
.tray {
  flex: 1;
  height: 60px;
  display: flex;
  align-items: center;
  position: relative;
}
.tr-cloud { margin-left: 58px; }
.temp { font-size: 20px; margin-left: 13px; }
.tr-up { margin-left: 25px; }
.tr-mic { margin-left: 16px; }
.tr-sync { margin-left: 16px; }
.tr-qq { margin-left: 13px; }
.tr-bat { margin-left: 19px; }
.tr-vol { margin-left: 12px; }
.tr-wifi { margin-left: 18px; }
.tr-en { font-size: 21px; margin-left: 12px; }
.tr-pin {
  width: 24px;
  height: 24px;
  border: 1px solid #333;
  box-sizing: border-box;
  font-size: 17px;
  line-height: 21px;
  text-align: center;
  margin-left: 19px;
  background: #f6f2ee;
  flex: none;
}
.clock {
  position: absolute;
  left: 500px;
  top: 3px;
  display: flex;
  flex-direction: column;
  font-size: 19px;
  line-height: 29px;
  white-space: nowrap;
  color: #222;
}
.clock span:first-child { margin-left: 17px; }
.clock .date { font-size: 20px; }
</style>
